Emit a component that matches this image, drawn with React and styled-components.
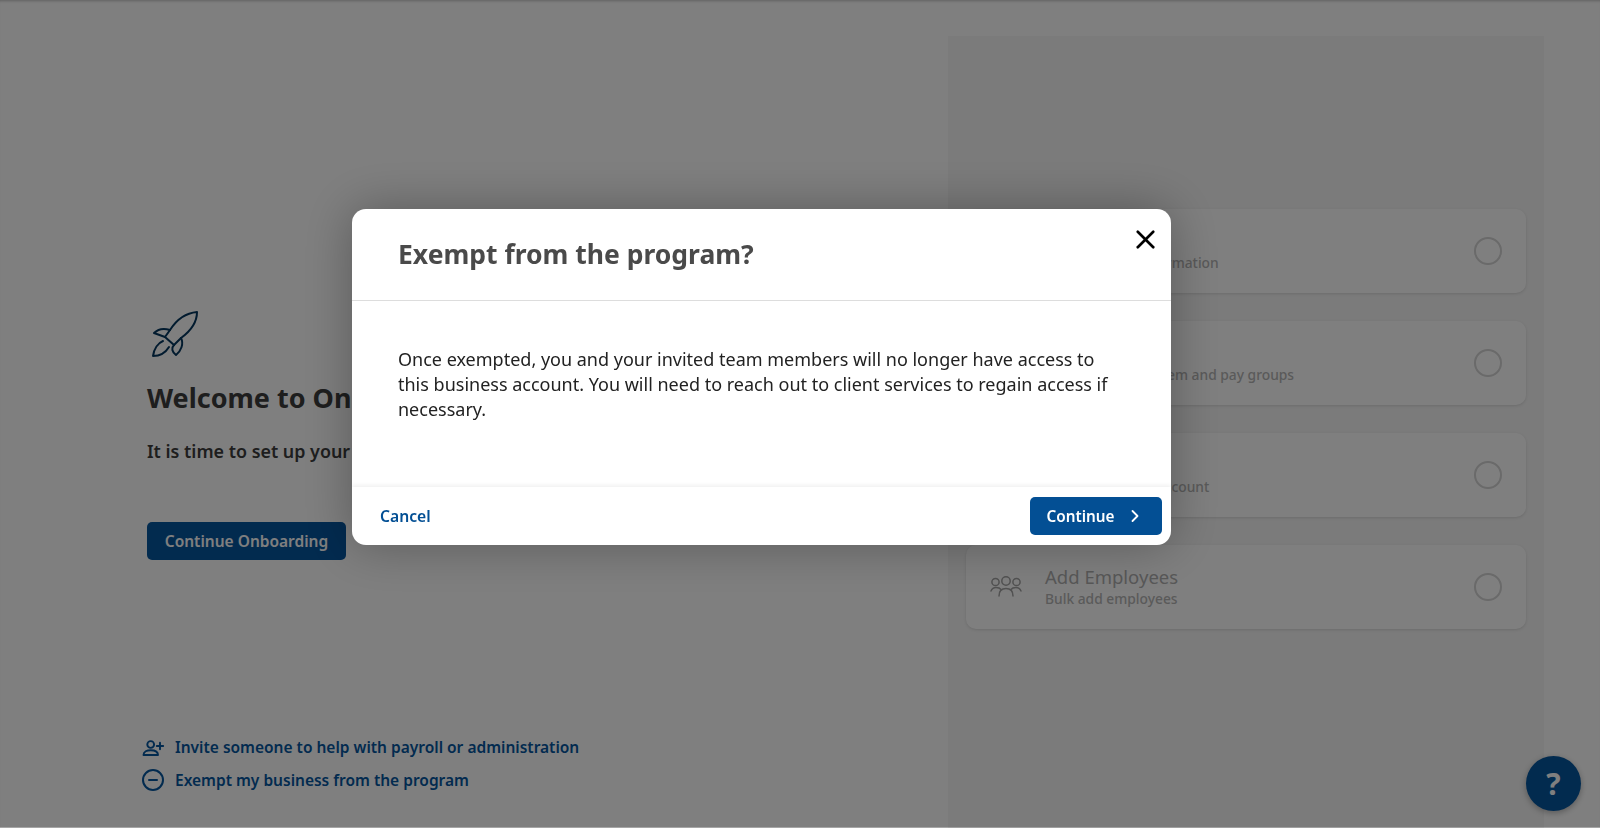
import React from 'react';
import styled, { createGlobalStyle } from 'styled-components';
import { ChevronRight, X, CircleMinus } from 'lucide-react';

const GlobalStyle = createGlobalStyle`
  html, body {
    margin: 0;
    padding: 0;
    height: 100%;
    overflow: hidden;
    background: #fff;
    font-family: "Noto Sans", "Liberation Sans", sans-serif;
  }
`;

const steps = [
  { title: 'Business Info', text: 'Your business information' },
  { title: 'Payroll Setup', text: 'Configure pay system and pay groups' },
  { title: 'Funding Setup', text: 'Setup your bank account' },
  { title: 'Add Employees', text: 'Bulk add employees', icon: true },
];

const RocketIcon = () => (
  <svg width="48" height="48" viewBox="0 0 48 48" fill="none" stroke="#05375f" strokeWidth="2" strokeLinejoin="round" strokeLinecap="round">
    <path d="M46 2 C35 3 26 9 19 20 L14 27 L23 35 L30 28 C41 20 46 12 46 2 Z" />
    <path d="M19 20 C13 18 7 19 3 23 L14 27" />
    <path d="M12 31 C7 33 3 39 2 46 C9 46 15 42 18 37" />
    <path d="M30 28 C33 34 30 41 25 45 C21 42 20 38 23 35" />
  </svg>
);

const InviteIcon = () => (
  <svg width="24" height="24" viewBox="0 0 24 24" fill="none" stroke="currentColor" strokeWidth="1.9" strokeLinecap="round" strokeLinejoin="round">
    <circle cx="9.7" cy="9.5" r="3.4" />
    <path d="M2.5 20 C2.5 16.5 6 15.2 9.7 15.2 C13.5 15.2 17 16.5 17 20 Z" />
    <path d="M19 7.8 V14.2 M15.8 11 H22.2" />
  </svg>
);

const TeamIcon = () => (
  <svg width="32" height="26" viewBox="0 0 32 26" fill="none" stroke="#a4a4a4" strokeWidth="1.5" strokeLinecap="round">
    <circle cx="16" cy="7" r="4.2" />
    <circle cx="5.5" cy="8" r="3.6" />
    <circle cx="26.5" cy="8" r="3.6" />
    <path d="M9 22 C9 17 12 14.5 16 14.5 C20 14.5 23 17 23 22" />
    <path d="M1 17 C2 14.5 4 13.5 6 13.5 C8 13.5 10 14 11 15.5" />
    <path d="M31 17 C30 14.5 28 13.5 26 13.5 C24 13.5 22 14 21 15.5" />
  </svg>
);

const App = () => (
  <>
    <GlobalStyle />
    <Page>
      <Intro>
        <Welcome>
          <RocketIcon />
          <Heading>Welcome to Onboarding</Heading>
          <Lead>It is time to set up your business account</Lead>
          <StartButton>Continue Onboarding</StartButton>
        </Welcome>
        <Links>
          <LinkRow>
            <InviteIcon />
            Invite someone to help with payroll or administration
          </LinkRow>
          <LinkRow>
            <CircleMinus size={24} strokeWidth={2} />
            Exempt my business from the program
          </LinkRow>
        </Links>
      </Intro>
      <StepsPanel>
        {steps.map((step) => (
          <StepCard key={step.title}>
            <StepIcon>{step.icon && <TeamIcon />}</StepIcon>
            <StepText>
              <StepTitle>{step.title}</StepTitle>
              <StepSub>{step.text}</StepSub>
            </StepText>
            <StepCheck />
          </StepCard>
        ))}
      </StepsPanel>
      <HelpButton>?</HelpButton>
    </Page>
    <Overlay>
      <Modal>
        <ModalHeader>
          <ModalTitle>Exempt from the program?</ModalTitle>
          <CloseButton>
            <X size={31} strokeWidth={2.1} />
          </CloseButton>
        </ModalHeader>
        <ModalBody>
          Once exempted, you and your invited team members will no longer have access to this business account. You will need to reach out to client services to regain access if necessary.
        </ModalBody>
        <ModalFooter>
          <CancelButton>Cancel</CancelButton>
          <ContinueButton>
            Continue
            <ChevronRight size={20} strokeWidth={2.2} />
          </ContinueButton>
        </ModalFooter>
      </Modal>
    </Overlay>
  </>
);

const Page = styled.div`
  display: flex;
  height: 828px;
  background: #fff;
  box-shadow: inset 0 3px 3px -2px rgba(0, 0, 0, 0.25);
`;

const Intro = styled.div`
  width: 948px;
  padding: 310px 0 36px 147px;
  box-sizing: border-box;
  display: flex;
  flex-direction: column;
  justify-content: space-between;
`;

const Welcome = styled.div`
  display: flex;
  flex-direction: column;
  align-items: flex-start;
  svg { margin-left: 4px; }
`;

const Heading = styled.h1`
  margin: 20px 0 0;
  font-size: 27px;
  line-height: 40px;
  font-weight: 700;
  color: #3d3d3d;
  white-space: nowrap;
`;

const Lead = styled.p`
  margin: 21px 0 0;
  font-size: 17.9px;
  line-height: 24px;
  font-weight: 600;
  color: #3d3d3d;
  white-space: nowrap;
`;

const StartButton = styled.button`
  margin-top: 59px;
  width: 199px;
  height: 38px;
  border: none;
  border-radius: 5px;
  background: #05569f;
  color: #fff;
  font: 600 15.5px "Noto Sans", sans-serif;
`;

const Links = styled.div`
  margin-left: -6px;
  display: flex;
  flex-direction: column;
  gap: 9px;
`;

const LinkRow = styled.a`
  display: flex;
  align-items: center;
  gap: 10px;
  height: 24px;
  font-size: 15.5px;
  font-weight: 600;
  color: #05569f;
  svg { flex: none; }
`;

const StepsPanel = styled.div`
  width: 596px;
  margin-top: 36px;
  padding: 173px 18px 0;
  box-sizing: border-box;
  display: flex;
  flex-direction: column;
  gap: 28px;
  background: #f6f6f6;
`;

const StepCard = styled.div`
  height: 84px;
  padding: 0 24px 0 24px;
  box-sizing: border-box;
  display: flex;
  align-items: center;
  background: #fff;
  border-radius: 10px;
  box-shadow: 0 1px 3px rgba(0, 0, 0, 0.12);
`;

const StepIcon = styled.div`
  width: 32px;
  margin-right: 23px;
  display: flex;
`;

const StepText = styled.div`
  flex: 1;
`;

const StepTitle = styled.div`
  font-size: 18.5px;
  line-height: 24px;
  color: #b0b0b0;
`;

const StepSub = styled.div`
  font-size: 13.8px;
  line-height: 20px;
  font-weight: 500;
  color: #b4b4b4;
`;

const StepCheck = styled.div`
  width: 24px;
  height: 24px;
  border: 2px solid #d4d4d4;
  border-radius: 50%;
`;

const HelpButton = styled.button`
  position: absolute;
  left: 1526px;
  top: 756px;
  width: 55px;
  height: 55px;
  border: none;
  border-radius: 50%;
  background: #05569f;
  color: #fff;
  font: 700 30px "Noto Sans", sans-serif;
  box-shadow: 0 2px 6px rgba(0, 0, 0, 0.3);
`;

const Overlay = styled.div`
  position: fixed;
  inset: 0;
  padding: 209px 0 0 352px;
  background: rgba(0, 0, 0, 0.5);
  background-clip: padding-box;
  border-bottom: 1px solid rgba(0, 0, 0, 0.35);
`;

const Modal = styled.div`
  width: 819px;
  height: 336px;
  display: flex;
  flex-direction: column;
  background: #fff;
  border-radius: 14px;
  overflow: hidden;
  box-shadow: 0 0 50px rgba(0, 0, 0, 0.3);
`;

const ModalHeader = styled.div`
  height: 91px;
  padding: 0 46px;
  flex: none;
  display: flex;
  align-items: center;
  justify-content: space-between;
  border-bottom: 1px solid #ddd;
`;

const ModalTitle = styled.h2`
  margin: 0 0 2px;
  font-size: 26.5px;
  font-weight: 700;
  color: #4a4a4a;
`;

const CloseButton = styled.button`
  margin: -30px -36px 0 0;
  padding: 0;
  border: none;
  background: none;
  display: flex;
  color: #000;
`;

const ModalBody = styled.div`
  flex: 1;
  padding: 46px 46px 0;
  font-size: 18px;
  line-height: 25px;
  color: #222;
`;

const ModalFooter = styled.div`
  height: 58px;
  padding: 0 9px 0 28px;
  flex: none;
  display: flex;
  align-items: center;
  justify-content: space-between;
  box-shadow: 0 -2px 4px rgba(0, 0, 0, 0.06);
`;

const CancelButton = styled.button`
  padding: 0;
  border: none;
  background: none;
  color: #034f94;
  font: 600 15.7px "Noto Sans", sans-serif;
`;

const ContinueButton = styled.button`
  width: 132px;
  height: 38px;
  border: none;
  border-radius: 5px;
  display: flex;
  align-items: center;
  justify-content: center;
  gap: 11px;
  background: #034f94;
  color: #fff;
  font: 600 15.3px "Noto Sans", sans-serif;
`;

export default App;
